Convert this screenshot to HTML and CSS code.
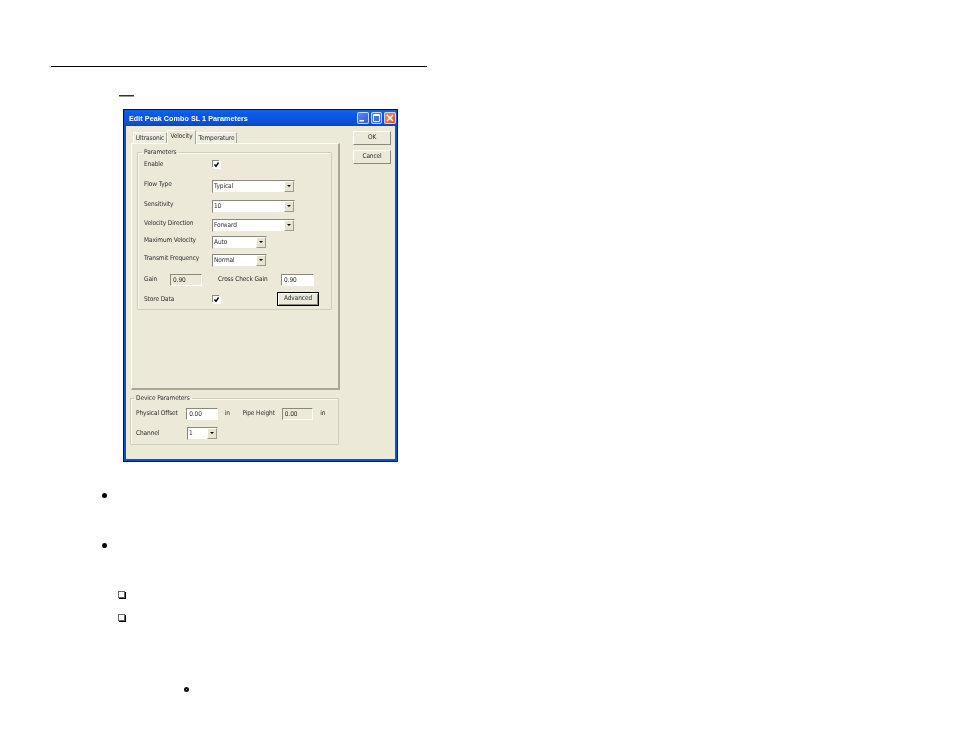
FILE: index.html
```html
<!DOCTYPE html>
<html lang="en">
<head>
<meta charset="utf-8">
<title>Edit Peak Combo SL 1 Parameters</title>
<link rel="stylesheet" href="styles.css">
</head>
<body>
<div class="page">
  <div class="rule"></div>
  <div class="dash"></div>
  <div class="dialog">
    <div class="titlebar">
      <span class="title">Edit Peak Combo SL 1 Parameters</span>
      <span class="winbtns">
        <span class="winbtn"><svg viewBox="0 0 12 12" width="12" height="12"><path d="M2.500 8h4.500v1.500h-4.500z" fill="#fff"/></svg></span>
        <span class="winbtn narrow"><svg viewBox="0 0 11 12" width="11" height="12"><path d="M2.500 2.500h6v7h-6z" fill="none" stroke="#fff"/><path d="M2.500 3.500h6" stroke="#fff"/></svg></span>
        <span class="winbtn close"><svg viewBox="0 0 12 12" width="12" height="12"><path d="M3 3l6 6M9 3l-6 6" stroke="#fff" stroke-width="1.600"/></svg></span>
      </span>
    </div>
    <div class="client">
      <div class="main">
        <div class="left">
          <div class="tabs">
            <span class="tab tab-u">Ultrasonic</span>
            <span class="tab active tab-v">Velocity</span>
            <span class="tab tab-t">Temperature</span>
          </div>
          <div class="panel">
            <fieldset class="group params">
              <legend>Parameters</legend>
              <div class="form">
                <span class="lbl lbl-low">Enable</span>
                <span class="check"><svg viewBox="0 0 7 7" width="7" height="7"><path d="M1.500 3.500l1.500 1.800L5.500 1.500" fill="none" stroke="#000" stroke-width="1.400"/></svg></span>
                <span class="lbl">Flow Type</span>
                <span class="combo wide"><span class="val">Typical</span><span class="arrow"></span></span>
                <span class="lbl">Sensitivity</span>
                <span class="combo wide"><span class="val">10</span><span class="arrow"></span></span>
                <span class="lbl">Velocity Direction</span>
                <span class="combo wide"><span class="val">Forward</span><span class="arrow"></span></span>
                <span class="lbl">Maximum Velocity</span>
                <span class="combo short"><span class="val">Auto</span><span class="arrow"></span></span>
                <span class="lbl">Transmit Frequency</span>
                <span class="combo short"><span class="val">Normal</span><span class="arrow"></span></span>
                <span class="lbl lbl-low">Gain</span>
                <span class="gainrow">
                  <span class="field readonly gain">0.90</span>
                  <span class="cross">Cross Check Gain</span>
                  <span class="field entry crossval">0.90</span>
                </span>
                <span class="lbl lbl-low">Store Data</span>
                <span class="storerow">
                  <span class="check"><svg viewBox="0 0 7 7" width="7" height="7"><path d="M1.500 3.500l1.500 1.800L5.500 1.500" fill="none" stroke="#000" stroke-width="1.400"/></svg></span>
                  <span class="btn default">Advanced</span>
                </span>
              </div>
            </fieldset>
          </div>
          <fieldset class="group device">
            <legend>Device Parameters</legend>
            <div class="devrow first">
              <span class="devlbl">Physical Offset</span>
              <span class="field entry devval">0.00</span>
              <span class="unit">in</span>
              <span class="pipe">Pipe Height</span>
              <span class="field readonly devval">0.00</span>
              <span class="unit">in</span>
            </div>
            <div class="devrow">
              <span class="devlbl">Channel</span>
              <span class="combo chan"><span class="val">1</span><span class="arrow"></span></span>
            </div>
          </fieldset>
        </div>
        <div class="right">
          <span class="btn side">OK</span>
          <span class="btn side">Cancel</span>
        </div>
      </div>
    </div>
  </div>
  <div class="bullet b1"></div>
  <div class="bullet b2"></div>
  <div class="box bx1"></div>
  <div class="box bx2"></div>
  <div class="mark"></div>
</div>
</body>
</html>
```

FILE: styles.css
```css
* { box-sizing: border-box; }
html, body { margin: 0; padding: 0; background: #fff; }
body { width: 954px; height: 738px; overflow: hidden; }
.page { display: flex; flex-direction: column; align-items: flex-start; padding: 66px 0 0 51px; }
.rule { width: 376px; height: 1px; background: #000; }
.dash { width: 15px; height: 2px; background: linear-gradient(#333 50%, #999 50%); margin: 28px 0 0 68px; }
.dialog {
  width: 275px; height: 353px; margin: 12px 0 0 72px;
  border: 1px solid #06124e; background: #0a50dc;
  padding: 0 2px 2px 2px; display: flex; flex-direction: column;
  font: 6.500px/9px "DejaVu Sans Condensed", "Liberation Sans", Arial, sans-serif; letter-spacing: -.1px; color: #2c2c2c;
  filter: blur(.3px);
}
.titlebar {
  height: 16px; flex: none; display: flex; align-items: center; justify-content: space-between;
  background: linear-gradient(#1264ec, #0a58e4 30%, #0a52d8 75%, #0a46bc);
  padding: 0 0 0 2px; margin: 0 -1px;
}
.title { color: #fff; font: bold 7.200px/9px "Liberation Sans", Arial, sans-serif; letter-spacing: .05px; margin-left: 2px; }
.winbtns { display: flex; gap: 2px; }
.winbtn {
  width: 12px; height: 12px; display: block; border-radius: 2px;
  background: linear-gradient(135deg, #5f8cf0, #2a58d8); box-shadow: inset 0 0 0 1px #c8d8f8;
}
.winbtn.narrow { width: 11px; }
.winbtn svg { display: block; }
.winbtn.close { background: linear-gradient(135deg, #f09070, #d84a20); }
.client { flex: 1; background: #ece9d8; padding: 5px 5px 0 4px; }
.main { display: flex; }
.left { width: 210px; flex: none; }
.right { display: flex; flex-direction: column; gap: 5px; margin-left: 13px; }
.tabs { height: 12px; display: flex; align-items: flex-end; padding-left: 3px; position: relative; }
.tab {
  height: 11px; display: block; text-align: center; line-height: 10px;
  background: #f0eee0; border: 1px solid #fff; border-right: 1px solid #aca899; border-bottom: 0;
  border-radius: 1px 1px 0 0;
}
.tab-u { width: 34px; }
.tab-v { width: 29px; }
.tab-t { width: 41px; }
.tab.active { height: 14px; line-height: 11px; background: #ece9d8; position: relative; z-index: 1; margin-bottom: -1px; }
.panel {
  width: 209px; height: 247px; margin-left: 1px; padding: 4px 0 0 5px;
  border: 1px solid #fff; border-right: 2px solid #a9a793; border-bottom: 2px solid #a9a793;
}
.group { margin: 0; padding: 0; min-width: 0; border: 1px solid #cfcdbb; box-shadow: 1px 1px 0 #fbfaf2 inset; border-radius: 1px; }
.group legend { padding: 0 2px; margin-left: -2px; line-height: 8px; }
.params { width: 195px; height: 162px; padding: 0 0 0 6px; }
.form {
  display: grid; grid-template-columns: 68px 1fr; align-items: center; margin-top: -3px;
  grid-template-rows: 23px 21px 19px 18px 17px 19px 19px 20px;
}
.lbl { white-space: nowrap; padding-bottom: 4px; }
.lbl-low { padding-bottom: 0; }
.check {
  width: 7px; height: 7px; display: block; background: #fff; margin-left: 1px;
  box-shadow: -1px -1px 0 #8a8876, 1px 1px 0 #fff;
}
.check svg { display: block; }
.combo {
  height: 13px; display: flex; align-items: center; justify-content: space-between;
  background: #fff; border: 1px solid; border-color: #8a8876 #ece9d8 #ece9d8 #8a8876; padding-left: 1px;
}
.wide { width: 83px; }
.short { width: 55px; }
.chan { width: 31px; }
.arrow {
  width: 10px; height: 11px; background: #e6e3d2; border: 1px solid; border-color: #fff #9d9b88 #9d9b88 #fff;
  position: relative; flex: none;
}
.arrow::after {
  content: ""; position: absolute; left: 2px; top: 3px; width: 0; height: 0;
  border: 2px solid transparent; border-top: 2.500px solid #000; border-bottom: 0;
}
.gainrow { display: flex; align-items: center; margin-left: -42px; }
.field { height: 12px; display: block; padding-left: 2px; line-height: 11px; border: 1px solid; border-color: #8a8876 #fff #fff #8a8876; }
.readonly { background: #ece9d8; }
.entry { background: #fff; }
.gain { width: 32px; }
.cross { width: 63px; margin-left: 16px; white-space: nowrap; }
.crossval { width: 33px; }
.storerow { display: flex; align-items: center; justify-content: space-between; padding-right: 12px; }
.btn {
  display: block; text-align: center; background: #ece9d8; line-height: 11px; height: 14px;
  border: 1px solid; border-color: #fff #8a8876 #8a8876 #fff;
}
.side { width: 38px; }
.default { width: 42px; border: 1px solid #000; box-shadow: inset 1px 1px 0 #fff, inset -1px -1px 0 #8a8876; }
.device { width: 209px; height: 51px; margin-top: 4px; padding: 5px 0 0 5px; }
.devrow { display: flex; align-items: center; height: 13px; }
.devrow.first { margin-bottom: 7px; }
.devlbl { width: 51px; padding-bottom: 1px; white-space: nowrap; }
.devval { width: 32px; }
.unit { width: 25px; padding-left: 7px; padding-bottom: 1px; }
.pipe { width: 40px; padding-bottom: 1px; white-space: nowrap; }
.bullet { width: 5px; height: 5px; border-radius: 50%; background: #000; margin-left: 51px; }
.b1 { margin-top: 31px; }
.b2 { margin-top: 45px; }
.box { width: 7px; height: 7px; margin-left: 67px; background: #fff; border: 1px solid #666; box-shadow: 1px 1px 0 #000; }
.bx1 { margin-top: 43px; }
.bx2 { margin-top: 16px; }
.mark { width: 5px; height: 5px; margin: 66px 0 0 133px; border-radius: 50%; background: #bbb; border: 2px solid #111; }
```
